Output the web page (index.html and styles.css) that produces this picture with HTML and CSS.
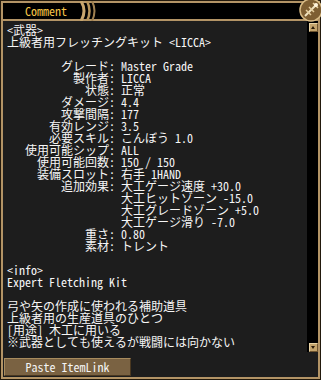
FILE: index.html
```html
<!DOCTYPE html>
<html lang="ja">
<head>
  <meta charset="UTF-8" />
  <meta name="viewport" content="width=device-width, initial-scale=1.0"/>
  <title>Comment</title>
  <link rel="stylesheet" href="styles.css">
</head>
<body>

  <div class="window">
    <div class="frame">
      <div class="titlebar">
        <span class="tab">Comment</span>
        <svg class="arcs" width="18" height="20" viewBox="0 0 18 20">
          <path d="M1 0 Q7 10 1 20" fill="none" stroke="#c9a66e" stroke-width="3"/>
          <path d="M7 0 Q12 10 7 20" fill="none" stroke="#b8955c" stroke-width="2.5"/>
          <path d="M12 0 Q17 10 12 20" fill="none" stroke="#a08050" stroke-width="2"/>
        </svg>
      </div>

      <div class="body">
        <div class="content">
          <p>&lt;武器&gt;</p>
          <p>上級者用フレッチングキット &lt;LICCA&gt;</p>

          <dl class="stats">
            <dt>グレード:</dt><dd>Master Grade</dd>
            <dt>製作者:</dt><dd>LICCA</dd>
            <dt>状態:</dt><dd>正常</dd>
            <dt>ダメージ:</dt><dd>4.4</dd>
            <dt>攻撃間隔:</dt><dd>177</dd>
            <dt>有効レンジ:</dt><dd>3.5</dd>
            <dt>必要スキル:</dt><dd>こんぼう 1.0</dd>
            <dt>使用可能シップ:</dt><dd>ALL</dd>
            <dt>使用可能回数:</dt><dd>150 / 150</dd>
            <dt>装備スロット:</dt><dd>右手 1HAND</dd>
            <dt>追加効果:</dt>
            <dd>
              大工ゲージ速度 +30.0<br>
              大工ヒットゾーン -15.0<br>
              大工グレードゾーン +5.0<br>
              大工ゲージ滑り -7.0
            </dd>
            <dt>重さ:</dt><dd>0.80</dd>
            <dt>素材:</dt><dd>トレント</dd>
          </dl>

          <p>&lt;info&gt;</p>
          <p>Expert Fletching Kit</p>

          <p class="desc">
            弓や矢の作成に使われる補助道具<br>
            上級者用の生産道具のひとつ<br>
            [用途] 木工に用いる<br>
            ※武器としても使えるが戦闘には向かない
          </p>
        </div>

        <div class="scrollbar">
          <span class="arrow up"></span>
          <span class="arrow down"></span>
        </div>
      </div>

      <div class="footer">
        <button class="paste-btn">Paste ItemLink</button>
      </div>
    </div>

    <!-- corner ornament -->
    <svg class="ornament" width="24" height="24" viewBox="0 0 24 24">
      <circle cx="12" cy="12" r="11" fill="#7e5e32" stroke="#d8bb86" stroke-width="1.5"/>
      <path d="M18 6 L6 18" stroke="#f0e2c0" stroke-width="2"/>
      <path d="M14 5 L19 10 M10 9 L15 14 M7 12 L12 17" stroke="#e4cc9c" stroke-width="1.5"/>
      <circle cx="17" cy="7" r="2" fill="#fff4dc"/>
    </svg>
  </div>

</body>
</html>
```

FILE: styles.css
```css
body {
  margin: 0;
  padding: 0;
  background: #000;
}

.window {
  position: relative;
  width: 321px;
  height: 380px;
  box-sizing: border-box;
  border: 1px solid #22190c;
  background: #1d1d1d;
  font-family: "Noto Sans Mono CJK JP", "Liberation Mono", "Noto Sans CJK JP", monospace;
  font-size: 12px;
  line-height: 12px;
  color: #f6f6f6;
}

.frame {
  height: 100%;
  box-sizing: border-box;
  border: 2px solid #b39466;
  display: flex;
  flex-direction: column;
}

.titlebar {
  height: 16px;
  background: #000;
  border-bottom: 2px solid #b39466;
  display: flex;
  align-items: center;
  padding-left: 22px;
}

.tab {
  color: #f4c447;
  width: 55px;
}

.arcs {
  display: block;
  margin-top: -2px;
  margin-bottom: -2px;
}

.body {
  height: 331px;
  display: flex;
}

.content {
  flex: 1;
  padding: 3px 0 0 4px;
  white-space: nowrap;
  overflow: hidden;
}

.content p {
  margin: 0;
}

.stats {
  display: grid;
  grid-template-columns: 108px 1fr;
  column-gap: 6px;
  margin: 12px 0;
}

.stats dt {
  text-align: right;
}

.stats dd {
  margin: 0;
}

.desc {
  margin-top: 12px !important;
}

.scrollbar {
  width: 11px;
  background: #000;
  display: flex;
  flex-direction: column;
  justify-content: space-between;
  align-items: center;
  padding: 2px 0 0 1px;
  box-sizing: border-box;
}

.arrow {
  width: 9px;
  height: 9px;
  box-sizing: border-box;
  background: #c4a46c;
  border: 1px solid #e8d3a4;
  border-right-color: #6e5430;
  border-bottom-color: #6e5430;
  position: relative;
}

.arrow::after {
  content: "";
  position: absolute;
  left: 1px;
  border-left: 2.5px solid transparent;
  border-right: 2.5px solid transparent;
}

.arrow.up::after {
  top: 2px;
  border-bottom: 3px solid #2a1a08;
}

.arrow.down::after {
  top: 2px;
  border-top: 3px solid #2a1a08;
}

.footer {
  flex: 1;
  padding: 6px 0 0 1px;
}

.paste-btn {
  display: block;
  width: 127px;
  height: 18px;
  padding: 0;
  background: #7a6242;
  border: 1px solid #a88c5e;
  border-right-color: #4a3820;
  border-bottom-color: #4a3820;
  color: #f4f4f4;
  font-family: inherit;
  font-size: 12px;
  line-height: 12px;
  text-align: center;
}

.ornament {
  position: absolute;
  right: -3px;
  top: -3px;
}
```
